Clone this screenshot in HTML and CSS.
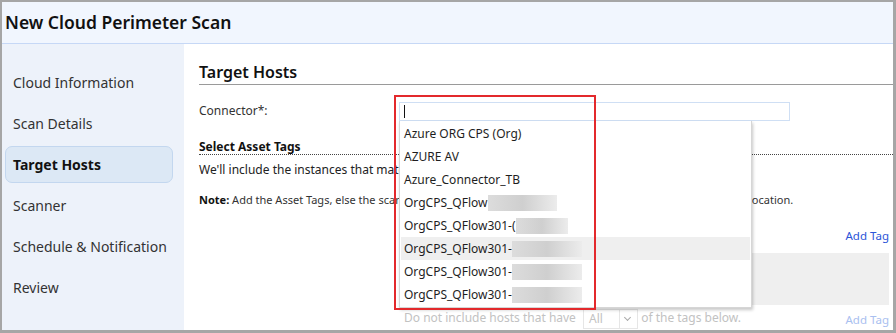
FILE: index.html
```html
<!DOCTYPE HTML>
<html>
<head>
    <meta charset="UTF-8">
    <title>New Cloud Perimeter Scan</title>
    <link rel="stylesheet" href="styles.css">
</head>
<body>
<div id="wrap">

    <div class="top">
        <h1>New Cloud Perimeter Scan</h1>
    </div>

    <div class="body">
        <div class="side">
            <ul>
                <li>Cloud Information</li>
                <li>Scan Details</li>
                <li class="on">Target Hosts</li>
                <li>Scanner</li>
                <li>Schedule &amp; Notification</li>
                <li>Review</li>
            </ul>
        </div>

        <div class="main">
            <h2>Target Hosts</h2>

            <div class="row">
                <label>Connector*:</label>
                <div class="field">
                    <div class="input"><span class="caret"></span></div>
                    <ul class="menu">
                        <li>Azure ORG CPS (Org)</li>
                        <li>AZURE AV</li>
                        <li>Azure_Connector_TB</li>
                        <li>OrgCPS_QFlow<i class="blur w1"></i></li>
                        <li>OrgCPS_QFlow301-(<i class="blur w2"></i></li>
                        <li class="on">OrgCPS_QFlow301-<i class="blur w3"></i></li>
                        <li>OrgCPS_QFlow301-<i class="blur w3"></i></li>
                        <li>OrgCPS_QFlow301-<i class="blur w3"></i></li>
                    </ul>
                    <div class="mark"></div>
                </div>
            </div>

            <h3>Select Asset Tags</h3>
            <p class="intro">We'll include the instances that match the tags you select below.</p>
            <p class="note"><b>Note:</b> Add the Asset Tags, else the scan will include all the instances found in the selected cloud connector location.</p>

            <div class="tags">
                <div class="tag-head">
                    <span>Include hosts that have <span class="sel"><span>Any</span><i class="arrow"></i></span> of the tags below.</span>
                    <a href="#">Add Tag</a>
                </div>
                <div class="tag-box"></div>
                <div class="tag-head off">
                    <span>Do not include hosts that have <span class="sel"><span>All</span><i class="arrow"></i></span> of the tags below.</span>
                    <a href="#">Add Tag</a>
                </div>
            </div>
        </div>
    </div>

</div>
</body>
</html>
```

FILE: styles.css
```css
body{font-family: "Noto Sans","Open Sans",sans-serif;}
body,p,h1,h2,h3{margin:0;}
ul,li{margin:0;padding:0;list-style:none;}

body{
    background: #a6a6a6;
    overflow: hidden;
}
#wrap{
    display: flex;
    flex-direction: column;
    height: 328px;
    margin: 2px 3px 3px 2px;
    background: #fff;
    overflow: hidden;
}
#wrap .top{
    height: 41px;
    padding-left: 3px;
    background: #f1f6fe;
    border-bottom: 1px solid #c6d8f6;
}
#wrap .top h1{
    font-size: 17.5px;
    font-weight: 600;
    line-height: 40px;
    color: #111;
}
#wrap .body{
    display: flex;
    flex: 1;
}
#wrap .side{
    width: 182px;
    padding: 20px 0 0 3px;
    box-sizing: border-box;
    background: #edf2fa;
}
#wrap .side li{
    width: 168px;
    height: 37px;
    margin-bottom: 4px;
    padding-left: 7px;
    box-sizing: border-box;
    border: 1px solid transparent;
    border-radius: 7px;
    line-height: 35px;
    font-size: 14px;
    color: #333;
    white-space: nowrap;
}
#wrap .side li.on{
    background: #dce8f5;
    border-color: #c3d7ef;
    font-weight: 700;
    color: #111;
}
#wrap .main{
    flex: 1;
    padding: 17px 0 0 15px;
}
#wrap .main h2{
    height: 23px;
    border-bottom: 1px solid #9a9a9a;
    font-size: 16px;
    font-weight: 600;
    line-height: 22px;
    color: #111;
}
#wrap .row{
    display: flex;
    margin-top: 17px;
    font-size: 12px;
    color: #333;
}
#wrap .row label{
    width: 200px;
    line-height: 17px;
}
#wrap .field{
    position: relative;
}
#wrap .input{
    width: 389px;
    height: 17px;
    border: 1px solid #cfdff4;
}
#wrap .caret{
    display: block;
    width: 1px;
    height: 13px;
    margin: 2px 0 0 4px;
    background: #111;
}
#wrap .menu{
    position: absolute;
    top: 19px;
    left: 0;
    z-index: 2;
    width: 349px;
    padding: 1px 1px 1px;
    background: #fff;
    border: 1px solid #d6d6d6;
    border-top: none;
    box-shadow: 1px 2px 3px rgba(0,0,0,.22);
}
#wrap .menu li{
    height: 23px;
    padding-left: 3px;
    line-height: 23px;
    font-size: 12px;
    color: #1e1e1e;
    white-space: nowrap;
}
#wrap .menu li.on{
    background: #efefef;
}
#wrap .blur{
    display: inline-block;
    height: 16px;
    vertical-align: -4px;
    background: linear-gradient(90deg, #dcdcdc, #cfcfcf 50%, #ececec);
}
#wrap .blur.w1{ width: 69px; }
#wrap .blur.w2{ width: 52px; }
#wrap .blur.w3{ width: 70px; }
#wrap .mark{
    position: absolute;
    top: -7px;
    left: -5px;
    z-index: 3;
    width: 198px;
    height: 211px;
    border: 2px solid #e3292c;
}
#wrap .main h3{
    margin-top: 18px;
    height: 15px;
    border-bottom: 1px dotted #444;
    font-size: 12px;
    font-weight: 700;
    line-height: 16px;
    color: #111;
}
#wrap .intro{
    margin-top: 6px;
    font-size: 12px;
    line-height: 18px;
    color: #222;
    white-space: nowrap;
}
#wrap .note{
    margin-top: 13px;
    font-size: 11px;
    line-height: 16px;
    color: #333;
    white-space: nowrap;
}
#wrap .note b{
    color: #111;
}
#wrap .tags{
    margin: 16px 4px 0 200px;
}
#wrap .tag-head{
    display: flex;
    justify-content: space-between;
    align-items: center;
    height: 22px;
    padding-left: 5px;
    font-size: 12px;
    color: #333;
}
#wrap .tag-head a{
    font-size: 11.5px;
    color: #2b55d8;
    text-decoration: none;
}
#wrap .tag-box{
    height: 52px;
    margin: 7px 0 3px;
    background: #efefef;
}
#wrap .tag-head.off{
    color: #c2c2c2;
}
#wrap .tag-head.off a{
    color: #a9c0f0;
}
#wrap .sel{
    display: inline-flex;
    width: 55px;
    height: 20px;
    margin: 0 0 0 4px;
    box-sizing: border-box;
    border: 1px solid #e6e6e6;
    line-height: 18px;
    vertical-align: middle;
}
#wrap .sel span{
    flex: 1;
    padding-left: 5px;
}
#wrap .sel .arrow{
    position: relative;
    width: 17px;
    border-left: 1px solid #e6e6e6;
}
#wrap .sel .arrow:after{
    content: "";
    position: absolute;
    top: 5px;
    left: 5px;
    width: 4px;
    height: 4px;
    border-right: 1.5px solid #aaa;
    border-bottom: 1.5px solid #aaa;
    transform: rotate(45deg);
}
```
